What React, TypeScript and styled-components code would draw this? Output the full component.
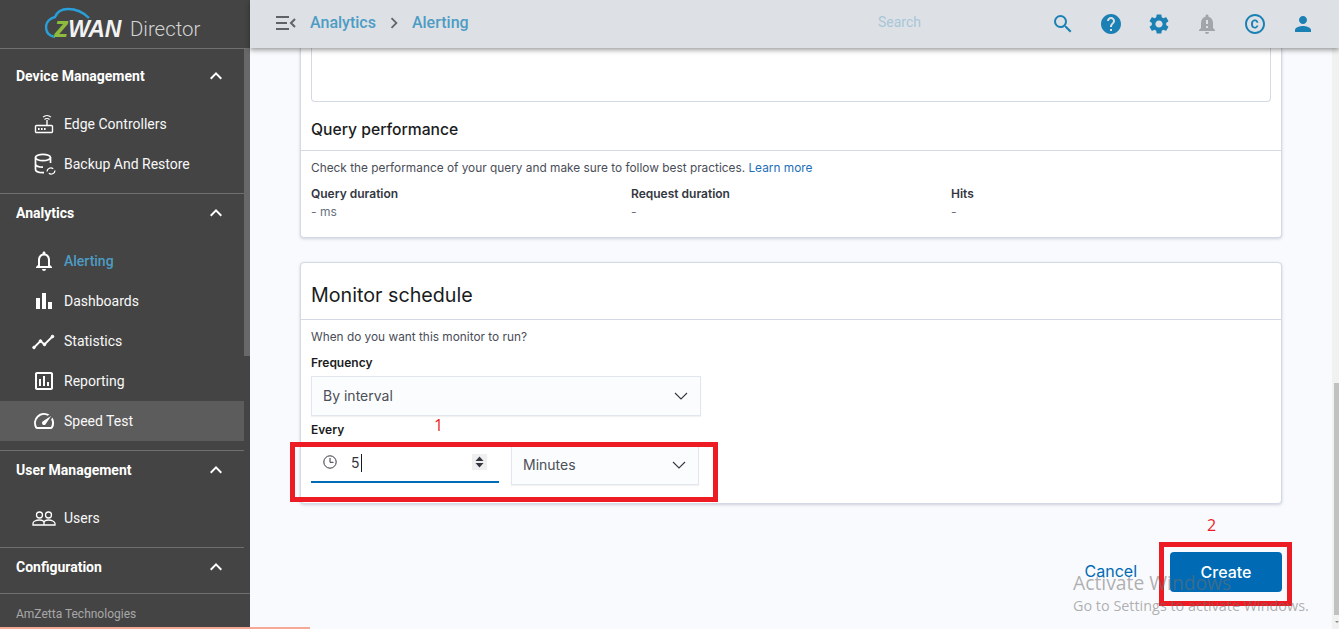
import React from 'react';
import styled, { createGlobalStyle } from 'styled-components';
import {
  MdSearch,
  MdHelp,
  MdSettings,
  MdNotificationImportant,
  MdOutlineCopyright,
  MdPerson,
  MdKeyboardArrowUp,
  MdOutlineNotifications,
  MdBarChart,
  MdOutlineAssessment,
  MdOutlineSpeed,
  MdChevronRight,
} from 'react-icons/md';

const GlobalStyle = createGlobalStyle`
  html, body {
    margin: 0;
    height: 100%;
    overflow: hidden;
    font-family: "Roboto", "Liberation Sans", sans-serif;
  }
  * { box-sizing: border-box; }
`;

const Page = styled.div`
  position: relative;
  display: flex;
  width: 1339px;
  height: 629px;
  overflow: hidden;
  background: #f9fafd;
`;

const Sidebar = styled.aside`
  position: relative;
  flex: 0 0 250px;
  display: flex;
  flex-direction: column;
  background: #444444;
  color: #fff;
`;

const LogoBar = styled.div`
  flex: 0 0 49px;
  display: flex;
  align-items: center;
  padding-left: 45px;
  border-bottom: 1px solid #6f6f6f;
`;

const LogoMark = styled.div`
  position: relative;
  width: 82px;
  height: 40px;
  flex: none;
`;

const LogoWord = styled.span`
  position: absolute;
  left: 9px;
  top: 10px;
  font: italic 900 23px/26px "Liberation Sans", sans-serif;
  letter-spacing: -0.3px;
  color: #f2f2f2;
  b { color: #8dbb3d; font-weight: 900; font-size: 29px; }
`;

const LogoProduct = styled.span`
  margin-top: 9px;
  margin-left: 3px;
  font-size: 20.4px;
  font-weight: 300;
  color: #d4d4d4;
`;

const NavList = styled.div`
  flex: 1;
  min-height: 0;
  overflow: hidden;
  width: 244px;
  padding-top: 8px;
`;

const NavSection = styled.section<{ $first?: boolean }>`
  padding-bottom: 9px;
  border-top: ${(p) => (p.$first ? 'none' : '1px solid #6f6f6f')};
`;

const SectionHead = styled.div`
  height: 40px;
  margin-top: -1px;
  margin-bottom: 8px;
  display: flex;
  align-items: center;
  justify-content: space-between;
  padding: 0 16px;
  font-size: 14px;
  font-weight: 700;
  svg { width: 24px; height: 24px; }
`;

const NavItem = styled.div<{ $active?: boolean; $hover?: boolean }>`
  height: 40px;
  display: flex;
  align-items: center;
  padding-left: 32px;
  gap: 8px;
  font-size: 14px;
  font-weight: ${(p) => (p.$active ? 500 : 400)};
  color: ${(p) => (p.$active ? '#4d9cc4' : '#f8f8f8')};
  background: ${(p) => (p.$hover ? '#5c5c5c' : 'transparent')};
`;

const NavIcon = styled.span`
  width: 24px;
  height: 24px;
  display: flex;
  align-items: center;
  justify-content: center;
  color: #fff;
  svg { width: 24px; height: 24px; }
`;

const SidebarFooter = styled.div`
  flex: 0 0 36px;
  padding: 13px 0 0 16px;
  border-top: 1px solid #6f6f6f;
  font-size: 12px;
  color: #a8a8a8;
`;

const SideThumb = styled.div`
  position: absolute;
  left: 244px;
  top: 49px;
  width: 6px;
  height: 307px;
  background: #686868;
`;

const Right = styled.div`
  flex: 1;
  min-width: 0;
  display: flex;
  flex-direction: column;
`;

const TopBar = styled.header`
  position: relative;
  z-index: 2;
  flex: 0 0 48px;
  display: flex;
  align-items: center;
  padding-left: 26px;
  background: #dde1e5;
  box-shadow: 0 2px 5px rgba(0, 0, 0, 0.4);
`;

const Crumb = styled.span`
  margin-top: -4px;
  font-size: 16px;
  font-weight: 500;
  color: #4d9cc4;
`;

const CrumbSep = styled.span`
  display: flex;
  width: 36px;
  justify-content: center;
  color: #666;
  margin-top: -2px;
  svg { width: 22px; height: 22px; }
`;

const MenuToggle = styled.svg`
  width: 20px;
  height: 16px;
  margin-right: 14px;
  margin-top: -2px;
`;

const SearchText = styled.span`
  margin-left: auto;
  margin-right: 118px;
  margin-top: -4px;
  font-size: 14px;
  color: #a9c6d8;
`;

const TopIcons = styled.div`
  display: flex;
  margin-right: 12px;
`;

const TopIcon = styled.span<{ $muted?: boolean }>`
  width: 48px;
  height: 48px;
  display: flex;
  align-items: center;
  justify-content: center;
  color: ${(p) => (p.$muted ? '#a3a6a9' : '#1b80b3')};
  svg { width: 24px; height: 24px; }
`;

const Body = styled.div`
  flex: 1;
  min-height: 0;
  display: flex;
`;

const Content = styled.main`
  flex: 1;
  min-width: 0;
  padding: 0 50px;
`;

const ScrollTrack = styled.div`
  position: relative;
  flex: 0 0 7px;
  background: #f1f1f1;
`;

const ScrollThumb = styled.div`
  position: absolute;
  left: 2px;
  right: 0;
  top: 335px;
  height: 232px;
  background: #c1c1c1;
`;

const ScrollArrow = styled.div`
  position: absolute;
  left: 3px;
  bottom: 6px;
  border-left: 2px solid transparent;
  border-right: 2px solid transparent;
  border-top: 2px solid #8a8a8a;
`;

const Card = styled.section`
  background: #fff;
  border: 1px solid #d3dae6;
  border-radius: 4px;
  box-shadow: 0 1px 3px rgba(152, 162, 179, 0.45);
`;

const TopCard = styled(Card)`
  height: 190px;
  border-top: none;
  border-radius: 0 0 4px 4px;
`;

const EditorStub = styled.div`
  height: 54px;
  margin: 0 10px;
  border: 1px solid #d3dae6;
  border-top: none;
  border-radius: 0 0 4px 4px;
`;

const CardTitle = styled.h3`
  margin: 0;
  padding: 17px 10px 0;
  height: 49px;
  font: 500 15.7px/21px "Inter", sans-serif;
  color: #1a1c21;
  border-bottom: 1px solid #d3dae6;
`;

const CardBody = styled.div`
  padding: 9px 10px 10px;
`;

const Hint = styled.p`
  margin: 0;
  font: 400 11.85px/16px "Inter", sans-serif;
  color: #4a4d57;
  a { color: #1d6fb8; text-decoration: none; }
`;

const Stats = styled.div`
  display: grid;
  grid-template-columns: repeat(3, 320px);
  margin-top: 10px;
`;

const StatLabel = styled.div`
  font: 600 12px/16px "Inter", sans-serif;
  color: #343741;
`;

const StatValue = styled.div`
  margin-top: 1px;
  font: 400 12px/18px "Inter", sans-serif;
  color: #69707d;
`;

const ScheduleCard = styled(Card)`
  height: 242px;
  margin-top: 24px;
`;

const ScheduleTitle = styled.h2`
  margin: 0;
  padding: 19px 10px 0;
  height: 57px;
  font: 400 19.7px/26px "Inter", sans-serif;
  color: #1a1c21;
  border-bottom: 1px solid #d3dae6;
`;

const FieldLabel = styled.div<{ $tight?: boolean }>`
  margin-top: ${(p) => (p.$tight ? '6px' : '10px')};
  margin-bottom: ${(p) => (p.$tight ? '7px' : '5px')};
  font: 600 12px/16px "Inter", sans-serif;
  color: #1a1c21;
`;

const SelectBox = styled.div<{ $width: number }>`
  width: ${(p) => p.$width}px;
  height: 40px;
  display: flex;
  align-items: center;
  justify-content: space-between;
  padding: 0 12px 0 11px;
  background: #fbfcfd;
  border: 1px solid #e2e6ee;
  box-shadow: 0 1px 1px rgba(0, 0, 0, 0.05);
  font: 400 14px/20px "Inter", sans-serif;
  color: #4b4f58;
`;

const Chevron = styled.svg`
  width: 14px;
  height: 8px;
`;

const EveryRow = styled.div`
  display: flex;
  align-items: flex-start;
  gap: 12px;
`;

const NumberInput = styled.div`
  width: 188px;
  height: 38px;
  display: flex;
  align-items: center;
  padding: 0 12px;
  border-bottom: 2px solid #006bb4;
  font: 400 14px/20px "Inter", sans-serif;
  color: #343741;
`;

const ClockIcon = styled.svg`
  width: 14px;
  height: 14px;
  margin-right: 14px;
  margin-top: -2px;
`;

const Value = styled.span`
  padding-right: 1px;
  border-right: 1px solid #1a1c21;
  line-height: 18px;
  margin-top: -1px;
`;

const Spinner = styled.svg`
  width: 15px;
  height: 16px;
  margin-left: auto;
  margin-top: -2px;
  background: #efefef;
`;

const Actions = styled.div`
  display: flex;
  justify-content: flex-end;
  align-items: center;
  margin-top: 48px;
  gap: 33px;
`;

const CancelLink = styled.span`
  padding-bottom: 2px;
  font: 400 16px/20px "Inter", sans-serif;
  color: #006bb4;
`;

const CreateButton = styled.button`
  width: 112px;
  height: 40px;
  border: none;
  border-radius: 4px;
  background: #006bb4;
  color: #fff;
  font: 500 16px/20px "Inter", sans-serif;
`;

/* annotations pasted over the screenshot */
const RedBox = styled.div<{ $x: number; $y: number; $w: number; $h: number }>`
  position: absolute;
  z-index: 3;
  left: ${(p) => p.$x}px;
  top: ${(p) => p.$y}px;
  width: ${(p) => p.$w}px;
  height: ${(p) => p.$h}px;
  border: 5px solid #ed1c24;
`;

const RedNumber = styled.span<{ $x: number; $y: number }>`
  position: absolute;
  z-index: 3;
  left: ${(p) => p.$x}px;
  top: ${(p) => p.$y}px;
  font: 400 16px/20px "Open Sans", sans-serif;
  color: #ed1c24;
`;

const Watermark = styled.div`
  position: absolute;
  z-index: 4;
  left: 1073px;
  top: 570px;
  font-family: "Open Sans", sans-serif;
  color: rgba(110, 110, 110, 0.55);
  pointer-events: none;
`;

const WatermarkTitle = styled.div`
  font-size: 19.3px;
  line-height: 25px;
`;

const WatermarkSub = styled.div`
  font-size: 14.4px;
  line-height: 21px;
`;

const LoadBar = styled.div`
  position: absolute;
  z-index: 5;
  left: 0;
  bottom: 0;
  width: 310px;
  height: 2px;
  background: #f7a998;
`;

const RouterIcon = () => (
  <svg viewBox="0 0 24 24" fill="none" stroke="#fff">
    <rect x="3.5" y="13.5" width="17" height="7" rx="1" strokeWidth="1.4" />
    <path d="M15 13V8" strokeWidth="1.4" />
    <path d="M12.5 7.5a3.5 3.5 0 0 1 5 0M11 5.2a6 6 0 0 1 8 0" strokeWidth="1.1" />
    <path d="M6 17h1.6M9 17h1.6M12 17h1.6" strokeWidth="2" />
  </svg>
);

const DatabaseIcon = () => (
  <svg viewBox="0 0 24 24" fill="none" stroke="#fff" strokeWidth="1.7">
    <ellipse cx="11" cy="5.500" rx="7.500" ry="3.200" />
    <path d="M3.500 5.500v12c0 1.700 3 3.200 7.500 3.200h1M18.500 5.500V11M3.500 12c0 1.700 3 3.200 7.500 3.200" />
    <path d="M15 19.500a3.800 3.800 0 0 1 6.200-2.700M23 18.500a3.800 3.800 0 0 1-6.200 2.700" strokeWidth="1.3" />
  </svg>
);

const TrendIcon = () => (
  <svg viewBox="0 0 24 24" fill="none" stroke="#fff">
    <path d="M2 18.5l6.5-6.5 4 3.5 8-8" strokeWidth="1.8" />
    <circle cx="2" cy="18.5" r="1.3" fill="#fff" />
    <circle cx="8.5" cy="12" r="1.3" fill="#fff" />
    <circle cx="12.5" cy="15.5" r="1.3" fill="#fff" />
    <circle cx="20.5" cy="7.5" r="1.3" fill="#fff" />
  </svg>
);

const UsersIcon = () => (
  <svg viewBox="0 0 24 24" fill="none" stroke="#fff" strokeWidth="1.3">
    <circle cx="7.5" cy="9" r="3" />
    <circle cx="16.5" cy="9" r="3" />
    <path d="M1 19v-1.500c0-2 3-3.500 6.500-3.500s4.500 1 4.500 3v2zM12 19v-2c0-2 1.500-3 4.500-3s6.500 1.500 6.500 3.500V19z" />
  </svg>
);

const CloudLogo = () => (
  <svg width="56" height="40" viewBox="0 0 56 40" fill="none" stroke="#2a9ed8" strokeWidth="2.4">
    <path d="M10 33C4 32 1 28 1 23c0-5 4-9 9-10 2-5 7-8 13-8 9 0 15 3 21 9" />
  </svg>
);

const ChevronDown = () => (
  <Chevron viewBox="0 0 14 8" fill="none" stroke="#343741" strokeWidth="1.1">
    <path d="M1 1l6 6 6-6" />
  </Chevron>
);

type Item = { label: string; icon: React.ReactNode; active?: boolean; hover?: boolean };

const sections: { title: string; items: Item[] }[] = [
  {
    title: 'Device Management',
    items: [
      { label: 'Edge Controllers', icon: <RouterIcon /> },
      { label: 'Backup And Restore', icon: <DatabaseIcon /> },
    ],
  },
  {
    title: 'Analytics',
    items: [
      { label: 'Alerting', icon: <MdOutlineNotifications />, active: true },
      { label: 'Dashboards', icon: <MdBarChart /> },
      { label: 'Statistics', icon: <TrendIcon /> },
      { label: 'Reporting', icon: <MdOutlineAssessment /> },
      { label: 'Speed Test', icon: <MdOutlineSpeed />, hover: true },
    ],
  },
  {
    title: 'User Management',
    items: [{ label: 'Users', icon: <UsersIcon /> }],
  },
  { title: 'Configuration', items: [] },
];

const App = () => {
  return (
    <Page>
      <GlobalStyle />
      <Sidebar>
        <LogoBar>
          <LogoMark>
            <CloudLogo />
            <LogoWord>
              <b>z</b>WAN
            </LogoWord>
          </LogoMark>
          <LogoProduct>Director</LogoProduct>
        </LogoBar>
        <NavList>
          {sections.map((s, i) => (
            <NavSection key={s.title} $first={i === 0}>
              <SectionHead>
                {s.title}
                <MdKeyboardArrowUp />
              </SectionHead>
              {s.items.map((item) => (
                <NavItem key={item.label} $active={item.active} $hover={item.hover}>
                  <NavIcon>{item.icon}</NavIcon>
                  {item.label}
                </NavItem>
              ))}
            </NavSection>
          ))}
        </NavList>
        <SidebarFooter>AmZetta Technologies</SidebarFooter>
        <SideThumb />
      </Sidebar>

      <Right>
        <TopBar>
          <MenuToggle viewBox="0 0 20 16" fill="none" stroke="#5f6368" strokeWidth="2">
            <path d="M0 2h13M0 8h11M0 14h13M19 4l-4 4 4 4" />
          </MenuToggle>
          <Crumb>Analytics</Crumb>
          <CrumbSep>
            <MdChevronRight />
          </CrumbSep>
          <Crumb>Alerting</Crumb>
          <SearchText>Search</SearchText>
          <TopIcons>
            <TopIcon><MdSearch /></TopIcon>
            <TopIcon><MdHelp /></TopIcon>
            <TopIcon><MdSettings /></TopIcon>
            <TopIcon $muted><MdNotificationImportant /></TopIcon>
            <TopIcon><MdOutlineCopyright /></TopIcon>
            <TopIcon><MdPerson /></TopIcon>
          </TopIcons>
        </TopBar>

        <Body>
          <Content>
            <TopCard>
              <EditorStub />
              <CardTitle>Query performance</CardTitle>
              <CardBody>
                <Hint>
                  Check the performance of your query and make sure to follow best practices. <a>Learn more</a>
                </Hint>
                <Stats>
                  <div>
                    <StatLabel>Query duration</StatLabel>
                    <StatValue>- ms</StatValue>
                  </div>
                  <div>
                    <StatLabel>Request duration</StatLabel>
                    <StatValue>-</StatValue>
                  </div>
                  <div>
                    <StatLabel>Hits</StatLabel>
                    <StatValue>-</StatValue>
                  </div>
                </Stats>
              </CardBody>
            </TopCard>

            <ScheduleCard>
              <ScheduleTitle>Monitor schedule</ScheduleTitle>
              <CardBody>
                <Hint>When do you want this monitor to run?</Hint>
                <FieldLabel>Frequency</FieldLabel>
                <SelectBox $width={390}>
                  By interval
                  <ChevronDown />
                </SelectBox>
                <FieldLabel $tight>Every</FieldLabel>
                <EveryRow>
                  <NumberInput>
                    <ClockIcon viewBox="0 0 14 14" fill="none" stroke="#343741" strokeWidth="1">
                      <circle cx="7" cy="7" r="6.2" />
                      <path d="M7 3v4.300h3.500" />
                    </ClockIcon>
                    <Value>5</Value>
                    <Spinner viewBox="0 0 15 16" fill="#343741">
                      <path d="M7.500 2.500l4 4.500H3.500zM7.500 13.500L3.500 9h8z" />
                    </Spinner>
                  </NumberInput>
                  <SelectBox $width={188}>
                    Minutes
                    <ChevronDown />
                  </SelectBox>
                </EveryRow>
              </CardBody>
            </ScheduleCard>

            <Actions>
              <CancelLink>Cancel</CancelLink>
              <CreateButton>Create</CreateButton>
            </Actions>
          </Content>
          <ScrollTrack>
            <ScrollThumb />
            <ScrollArrow />
          </ScrollTrack>
        </Body>
      </Right>

      <RedBox $x={290} $y={442} $w={428} $h={60} />
      <RedBox $x={1159} $y={542} $w={133} $h={64} />
      <RedNumber $x={434} $y={415}>1</RedNumber>
      <RedNumber $x={1207} $y={515}>2</RedNumber>
      <Watermark>
        <WatermarkTitle>Activate Windows</WatermarkTitle>
        <WatermarkSub>Go to Settings to activate Windows.</WatermarkSub>
      </Watermark>
      <LoadBar />
    </Page>
  );
};

export default App;
